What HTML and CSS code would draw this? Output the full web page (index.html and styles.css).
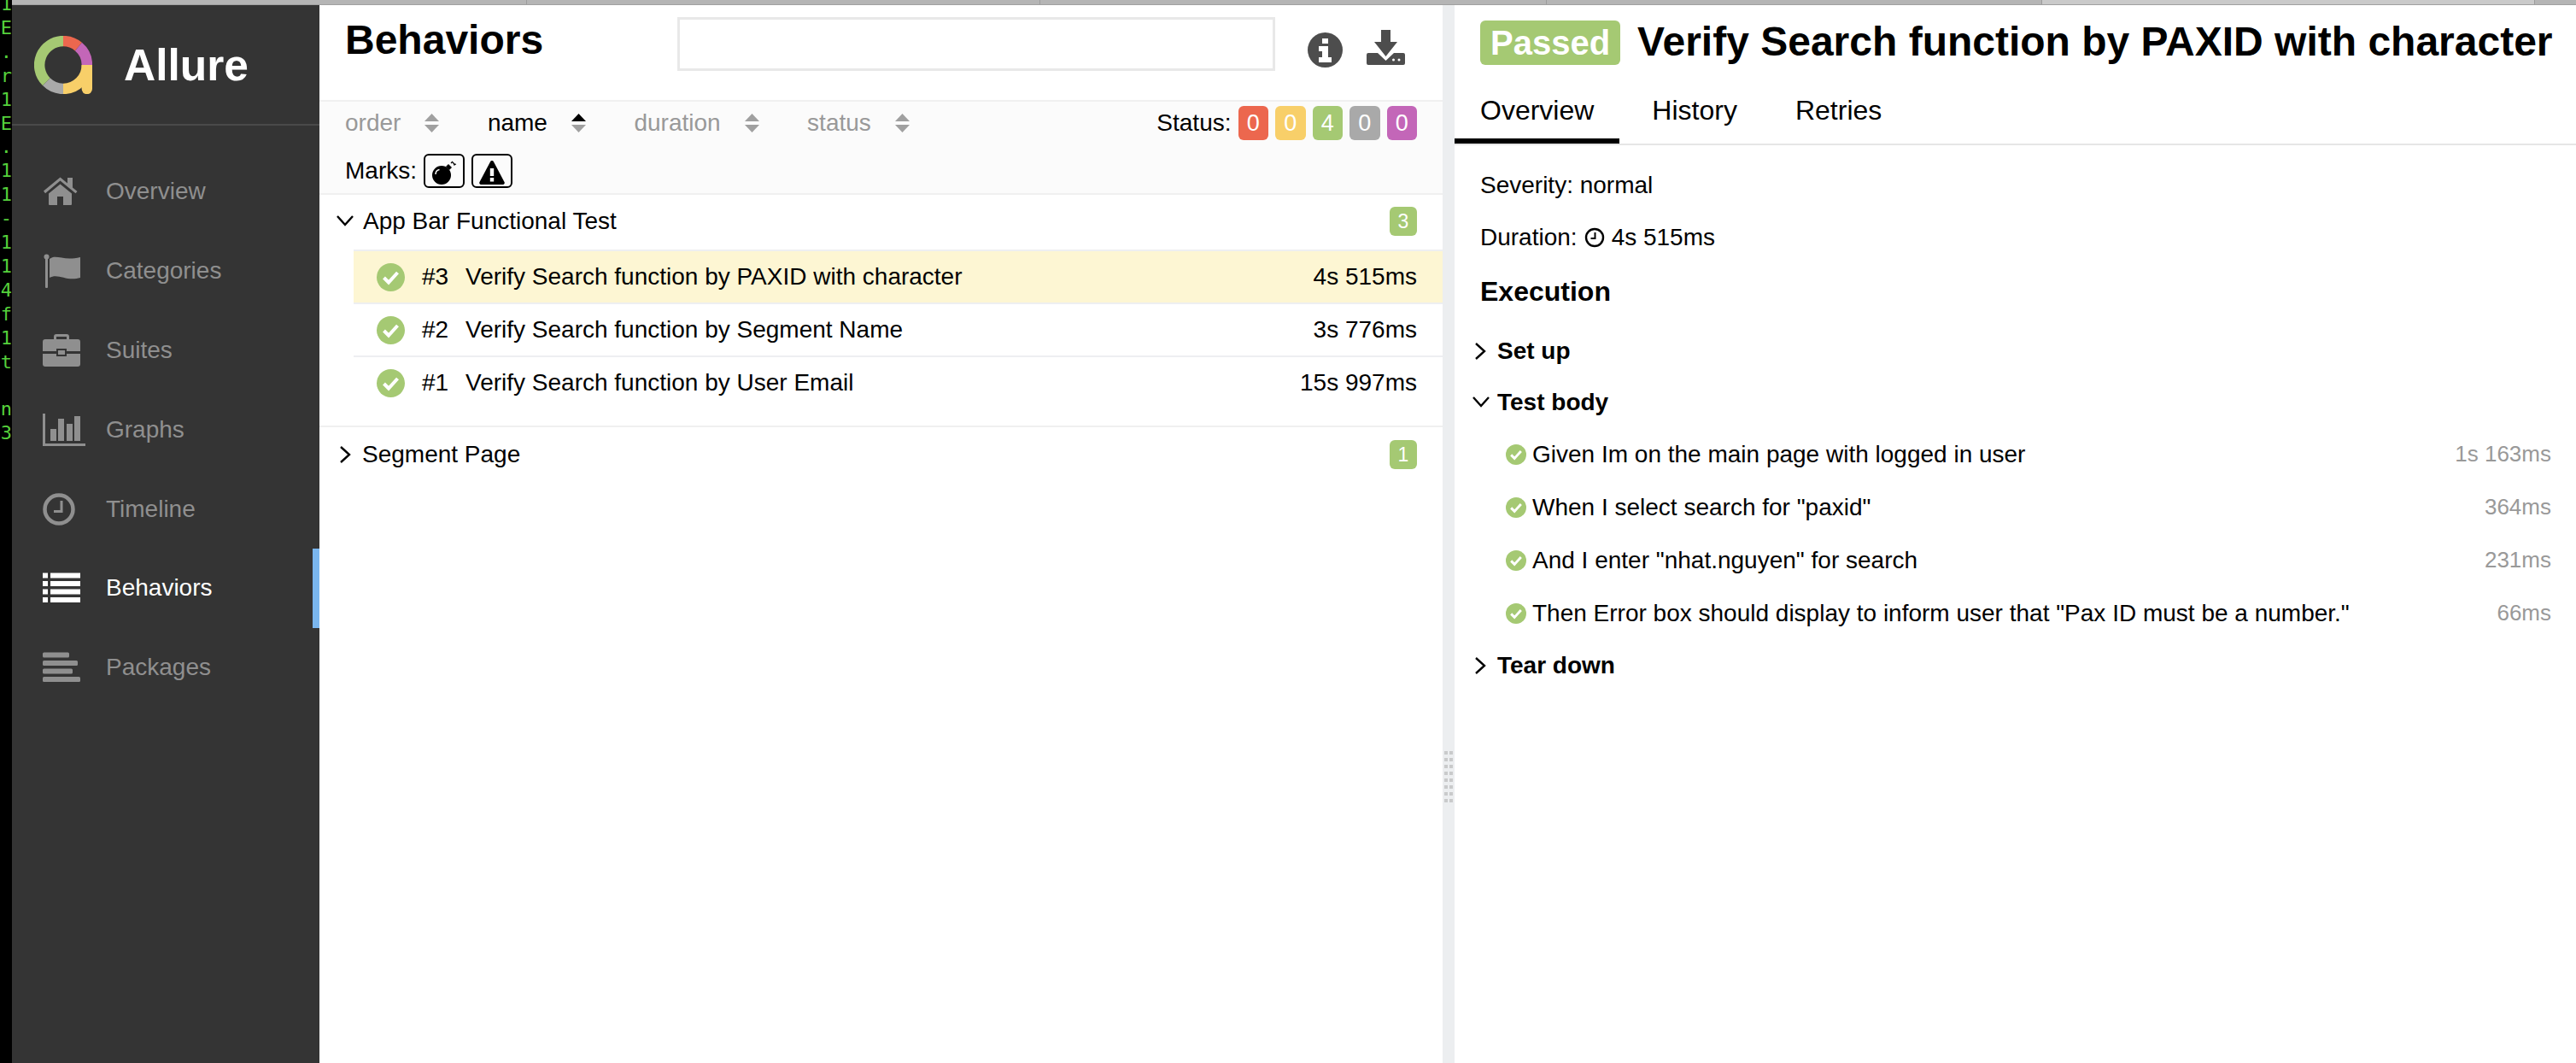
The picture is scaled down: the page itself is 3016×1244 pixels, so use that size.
FILE: index.html
```html
<!DOCTYPE html>
<html>
<head>
    <meta charset="UTF-8">
    <title>Allure Report</title>
    <link rel="stylesheet" href="styles.css">
</head>
<body>
    <div class="terminal">
        <div>1</div><div>E</div><div>.</div><div>r</div><div>1</div><div>E</div><div>.</div><div>1</div><div>1</div><div>-</div><div>1</div><div>1</div><div>4</div><div>f</div><div>1</div><div>t</div><div>&nbsp;</div><div>n</div><div>3</div>
    </div>
    <div class="window">
        <div class="tabstrip">
            <div class="strip-tab strip-tab-a"></div>
            <div class="strip-tab strip-tab-b"></div>
            <div class="strip-tab strip-tab-c"></div>
            <div class="strip-tab strip-tab-d"></div>
            <div class="strip-tab strip-tab-active"></div>
        </div>
        <div class="app">
            <aside class="sidebar">
                <div class="brand">
                    <svg class="logo" viewBox="0 0 68 68">
                        <g fill="none" stroke-width="12.5">
                            <path d="M34 6.1A27.9 27.9 0 0 1 51.9 12.6" stroke="#ec674e"/>
                            <path d="M51.9 12.6A27.9 27.9 0 0 1 61.9 34" stroke="#c366b8"/>
                            <path d="M61.9 34A27.9 27.9 0 0 1 34 61.9" stroke="#f8cf69"/>
                            <path d="M34 61.9A27.9 27.9 0 0 1 14.3 53.7" stroke="#a9a9a9"/>
                            <path d="M14.3 53.7A27.9 27.9 0 0 1 34 6.1" stroke="#a5c973"/>
                        </g>
                        <path d="M55.6 34H68V62a6 6 0 0 1-12.4 0z" fill="#f8cf69"/>
                    </svg>
                    <span class="brand-name">Allure</span>
                </div>
                <nav class="nav">
                    <a class="nav-item">
                        <svg class="nav-icon" viewBox="0 0 44 36"><path d="M1 17.5 20.5 1.5 29 8.5V2h6v11.5l5.5 4.5-2 2.2L20.5 5.5 3 20.2z"/><path d="M7 20.5 20.5 9.5 34 20.5V33a1 1 0 0 1-1 1H24V24H17V34H8a1 1 0 0 1-1-1z"/></svg>
                        <span>Overview</span>
                    </a>
                    <a class="nav-item">
                        <svg class="nav-icon" viewBox="0 0 44 40"><circle cx="4.5" cy="3.5" r="3"/><rect x="3" y="4" width="3" height="36" rx="1"/><path d="M8 6C16 0 24 9 44 4V28C28 33 18 22 8 28z"/></svg>
                        <span>Categories</span>
                    </a>
                    <a class="nav-item">
                        <svg class="nav-icon" viewBox="0 0 44 38"><path d="M13 8V3a3 3 0 0 1 3-3H28a3 3 0 0 1 3 3V8H28V3H16V8z"/><path d="M3 6H41a3 3 0 0 1 3 3V20H28V17H16V20H0V9a3 3 0 0 1 3-3z"/><path d="M0 23H16V26H28V23H44V35a3 3 0 0 1-3 3H3a3 3 0 0 1-3-3z"/><rect x="18" y="19" width="8" height="5"/></svg>
                        <span>Suites</span>
                    </a>
                    <a class="nav-item">
                        <svg class="nav-icon nav-icon-wide" viewBox="0 0 50 38"><path d="M0 0H3V35H50V38H0z"/><rect x="9" y="18" width="7" height="14"/><rect x="18" y="6" width="7" height="26"/><rect x="28" y="12" width="7" height="20"/><rect x="37" y="3" width="7" height="29"/></svg>
                        <span>Graphs</span>
                    </a>
                    <a class="nav-item">
                        <svg class="nav-icon" viewBox="0 0 44 38"><circle cx="19" cy="19" r="16.5" fill="none" stroke="#8f8f8f" stroke-width="4.5"/><path d="M20.5 9H23.5V23H13V20H20.5z"/></svg>
                        <span>Timeline</span>
                    </a>
                    <a class="nav-item nav-item-active">
                        <svg class="nav-icon" viewBox="0 0 44 35"><rect width="6" height="6"/><rect x="9" width="35" height="6"/><rect y="9.5" width="6" height="6"/><rect x="9" y="9.5" width="35" height="6"/><rect y="19" width="6" height="6"/><rect x="9" y="19" width="35" height="6"/><rect y="28.5" width="6" height="6"/><rect x="9" y="28.5" width="35" height="6"/></svg>
                        <span>Behaviors</span>
                    </a>
                    <a class="nav-item">
                        <svg class="nav-icon" viewBox="0 0 44 35"><rect width="31" height="6" rx="1.5"/><rect y="9.5" width="41" height="6" rx="1.5"/><rect y="19" width="35" height="6" rx="1.5"/><rect y="28.5" width="44" height="6" rx="1.5"/></svg>
                        <span>Packages</span>
                    </a>
                </nav>
            </aside>

            <main class="tree-pane">
                <header class="tree-header">
                    <h2 class="tree-title">Behaviors</h2>
                    <input class="search" type="text">
                    <svg class="info-icon" viewBox="0 0 41 41"><circle cx="20.5" cy="20.5" r="20.5" fill="#4d4d4d"/><path d="M17 7h7v6h-7zM13 16h11v13h4v6H13v-6h4v-7h-4z" fill="#fff"/></svg>
                    <svg class="download-icon" viewBox="0 0 45 41"><path d="M17 0H28V14H36L22.5 31 9 14H17z" fill="#4d4d4d"/><path d="M2 27H13L22.5 36 32 27H43a2 2 0 0 1 2 2V39a2 2 0 0 1-2 2H2a2 2 0 0 1-2-2V29a2 2 0 0 1 2-2z" fill="#4d4d4d"/><circle cx="31.5" cy="35" r="1.5" fill="#fff"/><circle cx="38" cy="35" r="1.5" fill="#fff"/></svg>
                </header>

                <section class="filters">
                    <div class="filter-row">
                        <span class="sorter">order<svg class="sort-icon" viewBox="0 0 17 22"><path d="M8.5 0 17 9H0z"/><path d="M0 13H17L8.5 22z"/></svg></span>
                        <span class="sorter sorter-active">name<svg class="sort-icon" viewBox="0 0 17 22"><path class="sort-up" d="M8.5 0 17 9H0z"/><path d="M0 13H17L8.5 22z"/></svg></span>
                        <span class="sorter">duration<svg class="sort-icon" viewBox="0 0 17 22"><path d="M8.5 0 17 9H0z"/><path d="M0 13H17L8.5 22z"/></svg></span>
                        <span class="sorter">status<svg class="sort-icon" viewBox="0 0 17 22"><path d="M8.5 0 17 9H0z"/><path d="M0 13H17L8.5 22z"/></svg></span>
                        <span class="status-label">Status:</span>
                        <span class="badge badge-failed">0</span>
                        <span class="badge badge-broken">0</span>
                        <span class="badge badge-passed">4</span>
                        <span class="badge badge-skipped">0</span>
                        <span class="badge badge-unknown">0</span>
                    </div>
                    <div class="marks-row">
                        <span>Marks:</span>
                        <button class="mark">
                            <svg viewBox="0 0 30 28"><circle cx="12" cy="17" r="11"/><path d="M17 7 20 4l4 4-3 3z"/><path d="M23 3 25 1M26 5l3-1M25 2l3 3" stroke="#000" stroke-width="1.2" fill="none"/><path d="M5 16c0-3 2-5 4.5-5.5" stroke="#fff" stroke-width="1.5" fill="none"/></svg>
                        </button>
                        <button class="mark">
                            <svg viewBox="0 0 30 28"><path d="M15 0a2 2 0 0 1 1.800 1L29.5 25a2 2 0 0 1-1.800 3H2.300a2 2 0 0 1-1.800-3L13.200 1A2 2 0 0 1 15 0z"/><path d="M12.800 9h4.400v9h-4.400zM12.800 20h4.400v4.400h-4.400z" fill="#fff"/></svg>
                        </button>
                    </div>
                </section>

                <div class="group">
                    <svg class="chevron" viewBox="0 0 20 20"><path d="M1 4 10 14 19 4"/></svg>
                    <span class="group-name">App Bar Functional Test</span>
                    <span class="count">3</span>
                </div>
                <ul class="cases">
                    <li class="case case-selected">
                        <svg class="check check-large" viewBox="0 0 33 33"><circle cx="16.5" cy="16.5" r="16.5"/><path d="M8.5 17 14 22.5 24.5 11"/></svg>
                        <span class="case-num">#3</span>
                        <span class="case-name">Verify Search function by PAXID with character</span>
                        <span class="case-time">4s 515ms</span>
                    </li>
                    <li class="case">
                        <svg class="check check-large" viewBox="0 0 33 33"><circle cx="16.5" cy="16.5" r="16.5"/><path d="M8.5 17 14 22.5 24.5 11"/></svg>
                        <span class="case-num">#2</span>
                        <span class="case-name">Verify Search function by Segment Name</span>
                        <span class="case-time">3s 776ms</span>
                    </li>
                    <li class="case">
                        <svg class="check check-large" viewBox="0 0 33 33"><circle cx="16.5" cy="16.5" r="16.5"/><path d="M8.5 17 14 22.5 24.5 11"/></svg>
                        <span class="case-num">#1</span>
                        <span class="case-name">Verify Search function by User Email</span>
                        <span class="case-time">15s 997ms</span>
                    </li>
                </ul>
                <div class="group group-closed">
                    <svg class="chevron" viewBox="0 0 20 20"><path d="M4 1 14 10 4 19"/></svg>
                    <span class="group-name">Segment Page</span>
                    <span class="count">1</span>
                </div>
            </main>

            <div class="gutter">
                <div class="grip"></div>
            </div>

            <section class="detail-pane">
                <div class="detail-head">
                    <span class="passed">Passed</span>
                    <h2 class="detail-title">Verify Search function by PAXID with character</h2>
                </div>
                <div class="tabs">
                    <span class="tab tab-active">Overview</span>
                    <span class="tab">History</span>
                    <span class="tab">Retries</span>
                </div>
                <div class="detail-body">
                    <div class="meta">Severity: normal</div>
                    <div class="meta meta-duration">Duration:
                        <svg class="clock" viewBox="0 0 24 24"><circle cx="12" cy="12" r="10" fill="none" stroke="#000" stroke-width="2.4"/><path d="M11.5 6h2v8H7.5v-2h4z"/></svg>
                        4s 515ms</div>
                    <h3 class="execution">Execution</h3>

                    <div class="stage">
                        <svg class="chevron" viewBox="0 0 20 20"><path d="M4 1 14 10 4 19"/></svg>Set up
                    </div>
                    <div class="stage">
                        <svg class="chevron" viewBox="0 0 20 20"><path d="M1 4 10 14 19 4"/></svg>Test body
                    </div>
                    <div class="step">
                        <svg class="check" viewBox="0 0 33 33"><circle cx="16.5" cy="16.5" r="16.5"/><path d="M8.5 17 14 22.5 24.5 11"/></svg>
                        <span class="step-name">Given Im on the main page with logged in user</span>
                        <span class="step-time">1s 163ms</span>
                    </div>
                    <div class="step">
                        <svg class="check" viewBox="0 0 33 33"><circle cx="16.5" cy="16.5" r="16.5"/><path d="M8.5 17 14 22.5 24.5 11"/></svg>
                        <span class="step-name">When I select search for "paxid"</span>
                        <span class="step-time">364ms</span>
                    </div>
                    <div class="step">
                        <svg class="check" viewBox="0 0 33 33"><circle cx="16.5" cy="16.5" r="16.5"/><path d="M8.5 17 14 22.5 24.5 11"/></svg>
                        <span class="step-name">And I enter "nhat.nguyen" for search</span>
                        <span class="step-time">231ms</span>
                    </div>
                    <div class="step">
                        <svg class="check" viewBox="0 0 33 33"><circle cx="16.5" cy="16.5" r="16.5"/><path d="M8.5 17 14 22.5 24.5 11"/></svg>
                        <span class="step-name">Then Error box should display to inform user that "Pax ID must be a number."</span>
                        <span class="step-time">66ms</span>
                    </div>
                    <div class="stage">
                        <svg class="chevron" viewBox="0 0 20 20"><path d="M4 1 14 10 4 19"/></svg>Tear down
                    </div>
                </div>
            </section>
        </div>
    </div>
</body>
</html>
```

FILE: styles.css
```css
* {
    box-sizing: border-box;
}

html, body {
    height: 100%;
}

body {
    margin: 0;
    display: flex;
    overflow: hidden;
    font-family: "Liberation Sans", Arial, sans-serif;
    font-size: 28px;
    color: #000;
    background-color: #fff;
}

/* terminal peeking out behind the browser window */
.terminal {
    flex: 0 0 14px;
    overflow: hidden;
    background-color: #000;
    color: #55d03c;
    font-family: "DejaVu Sans Mono", monospace;
    font-size: 22px;
    line-height: 27.9px;
    text-align: right;
}

.terminal div:first-child {
    margin-top: -9px;
}

.window {
    flex: 1;
    min-width: 0;
    display: flex;
    flex-direction: column;
}

.tabstrip {
    flex: 0 0 6px;
    display: flex;
    background-color: #b5b5b5;
    border-bottom: 1px solid #a0a0a0;
}

.strip-tab {
    border-right: 1px solid #9c9c9c;
}

.strip-tab-a { width: 603px; }
.strip-tab-b { width: 601px; }
.strip-tab-c { width: 593px; }
.strip-tab-d { width: 580px; }

.strip-tab-active {
    width: 577px;
    background-color: #cacaca;
}

.app {
    flex: 1;
    min-height: 0;
    display: flex;
}

/* sidebar */
.sidebar {
    flex: 0 0 360px;
    background-color: #343434;
    color: #8f8f8f;
}

.brand {
    height: 141px;
    padding: 36px 0 0 26px;
    display: flex;
    align-items: flex-start;
    gap: 37px;
    border-bottom: 2px solid #4a4a4a;
}

.logo {
    width: 68px;
    height: 68px;
}

.brand-name {
    font-size: 51.5px;
    font-weight: bold;
    line-height: 68px;
    color: #fff;
}

.nav {
    padding-top: 31px;
}

.nav-item {
    height: 92.8px;
    padding-left: 36px;
    display: flex;
    align-items: center;
}

.nav-item span {
    margin-left: 30px;
}

.nav-icon {
    width: 44px;
    height: 40px;
    fill: #8f8f8f;
}

.nav-icon-wide {
    width: 50px;
    margin-right: -6px;
}

.nav-item-active {
    color: #fff;
    border-right: 8px solid #7ab6ee;
}

.nav-item-active .nav-icon {
    fill: #fff;
}

/* middle pane */
.tree-pane {
    flex: 0 0 1315px;
}

.tree-header {
    height: 111px;
    padding: 14px 0 0 30px;
    display: flex;
    align-items: flex-start;
}

.tree-title {
    flex: 0 0 389px;
    margin: 0;
    font-size: 48px;
    line-height: 54px;
}

.search {
    width: 700px;
    height: 63px;
    border: 3px solid #e8e8e8;
    background-color: #fff;
}

.info-icon {
    width: 41px;
    height: 41px;
    margin: 18px 0 0 38px;
}

.download-icon {
    width: 45px;
    height: 41px;
    margin: 15px 0 0 28px;
}

.filters {
    height: 111px;
    padding: 5px 30px 0;
    background-color: #fbfbfb;
    border-top: 2px solid #f0f0f0;
    border-bottom: 2px solid #f0f0f0;
}

.filter-row {
    height: 40px;
    display: flex;
    align-items: center;
    gap: 8px;
}

.sorter {
    margin-right: 48.5px;
    display: flex;
    align-items: center;
    color: #999;
}

.sort-icon {
    width: 17px;
    height: 22px;
    margin-left: 28px;
    fill: #a0a0a0;
}

.sorter-active {
    color: #000;
}

.sort-up {
    fill: #000;
}

.status-label {
    margin-left: auto;
}

.badge {
    width: 35.5px;
    height: 40px;
    border-radius: 6px;
    color: #fff;
    font-size: 27px;
    line-height: 40px;
    text-align: center;
}

.badge-failed { background-color: #ec674e; }
.badge-broken { background-color: #f8cf69; }
.badge-passed { background-color: #a5c973; }
.badge-skipped { background-color: #a9a9a9; }
.badge-unknown { background-color: #c366b8; }

.marks-row {
    height: 40px;
    margin-top: 16px;
    display: flex;
    align-items: center;
    gap: 8px;
}

.mark {
    width: 48px;
    height: 40px;
    padding: 3px 0 0;
    background: none;
    border: 2px solid #000;
    border-radius: 6px;
}

.mark svg {
    display: block;
    width: 30px;
    height: 28px;
    margin: 0 auto;
}

.group {
    height: 64px;
    padding: 0 30px 3px 20px;
    display: flex;
    align-items: center;
}

.group-closed {
    height: 62px;
    padding: 3px 30px 0 20px;
    border-top: 2px solid #f0f0f0;
}

.chevron {
    flex: none;
    width: 20px;
    height: 20px;
    fill: none;
    stroke: #000;
    stroke-width: 2.4;
}

.group-name {
    margin-left: 11px;
}

.group-closed .chevron {
    margin-left: 1px;
}

.group-closed .group-name {
    margin-left: 9px;
}

.count {
    margin-left: auto;
    width: 32px;
    height: 34px;
    border-radius: 6px;
    background-color: #a5c973;
    color: #fff;
    font-size: 23px;
    line-height: 34px;
    text-align: center;
}

.cases {
    margin: 0 0 20px 40px;
    padding: 0;
    list-style: none;
}

.case {
    height: 62px;
    padding: 0 30px 0 27px;
    display: flex;
    align-items: center;
    border-top: 2px solid #eeeff1;
}

.case-selected {
    background-color: #fdf6d3;
}

.check {
    flex: none;
    width: 24px;
    height: 24px;
    fill: #a5c973;
}

.check path {
    fill: none;
    stroke: #fff;
    stroke-width: 4;
}

.check-large {
    width: 33px;
    height: 33px;
}

.case-num {
    width: 71px;
    padding-left: 20px;
}

.case-time {
    margin-left: auto;
}

/* splitter, its grip sits at the middle of the full page, lower than this window */
.gutter {
    flex: 0 0 14px;
    padding: 873px 2px 0;
    background-color: #eceef0;
}

.grip {
    width: 10px;
    height: 60px;
    background-image:
        repeating-linear-gradient(90deg, transparent 0 4px, #eceef0 4px 6px),
        repeating-linear-gradient(180deg, #c9cacb 0 4px, transparent 4px 8px);
}

/* right pane */
.detail-pane {
    flex: 1;
    min-width: 0;
}

.detail-head {
    height: 94px;
    padding: 18px 0 0 30px;
    display: flex;
    align-items: flex-start;
    gap: 20px;
    white-space: nowrap;
}

.passed {
    height: 52px;
    padding: 0 12px;
    border-radius: 6px;
    background-color: #a5c973;
    color: #fff;
    font-size: 40px;
    font-weight: bold;
    line-height: 52px;
}

.detail-title {
    margin: 0;
    font-size: 48px;
    line-height: 50px;
}

.tabs {
    height: 70px;
    display: flex;
    gap: 8px;
    border-bottom: 2px solid #e6e6e6;
}

.tab {
    height: 68px;
    padding: 0 30px;
    font-size: 32px;
    line-height: 58px;
}

.tab-active {
    border-bottom: 6px solid #000;
}

.detail-body {
    padding: 31px 29px 0 30px;
}

.meta {
    display: flex;
    align-items: center;
    height: 32px;
    gap: 8px;
}

.meta-duration {
    margin-top: 29px;
}

.clock {
    width: 24px;
    height: 24px;
}

.execution {
    margin: 27px 0 20px;
    font-size: 32px;
    line-height: 40px;
}

.stage {
    height: 60px;
    margin-left: -16px;
    display: flex;
    align-items: center;
    font-weight: bold;
}

.stage .chevron {
    margin: 0 9px 0 7px;
}

.step {
    height: 62px;
    margin-left: 30px;
    padding-bottom: 1px;
    display: flex;
    align-items: center;
}

.step-name {
    margin-left: 7px;
}

.step-time {
    margin-left: auto;
    font-size: 26px;
    color: #999;
}
```
